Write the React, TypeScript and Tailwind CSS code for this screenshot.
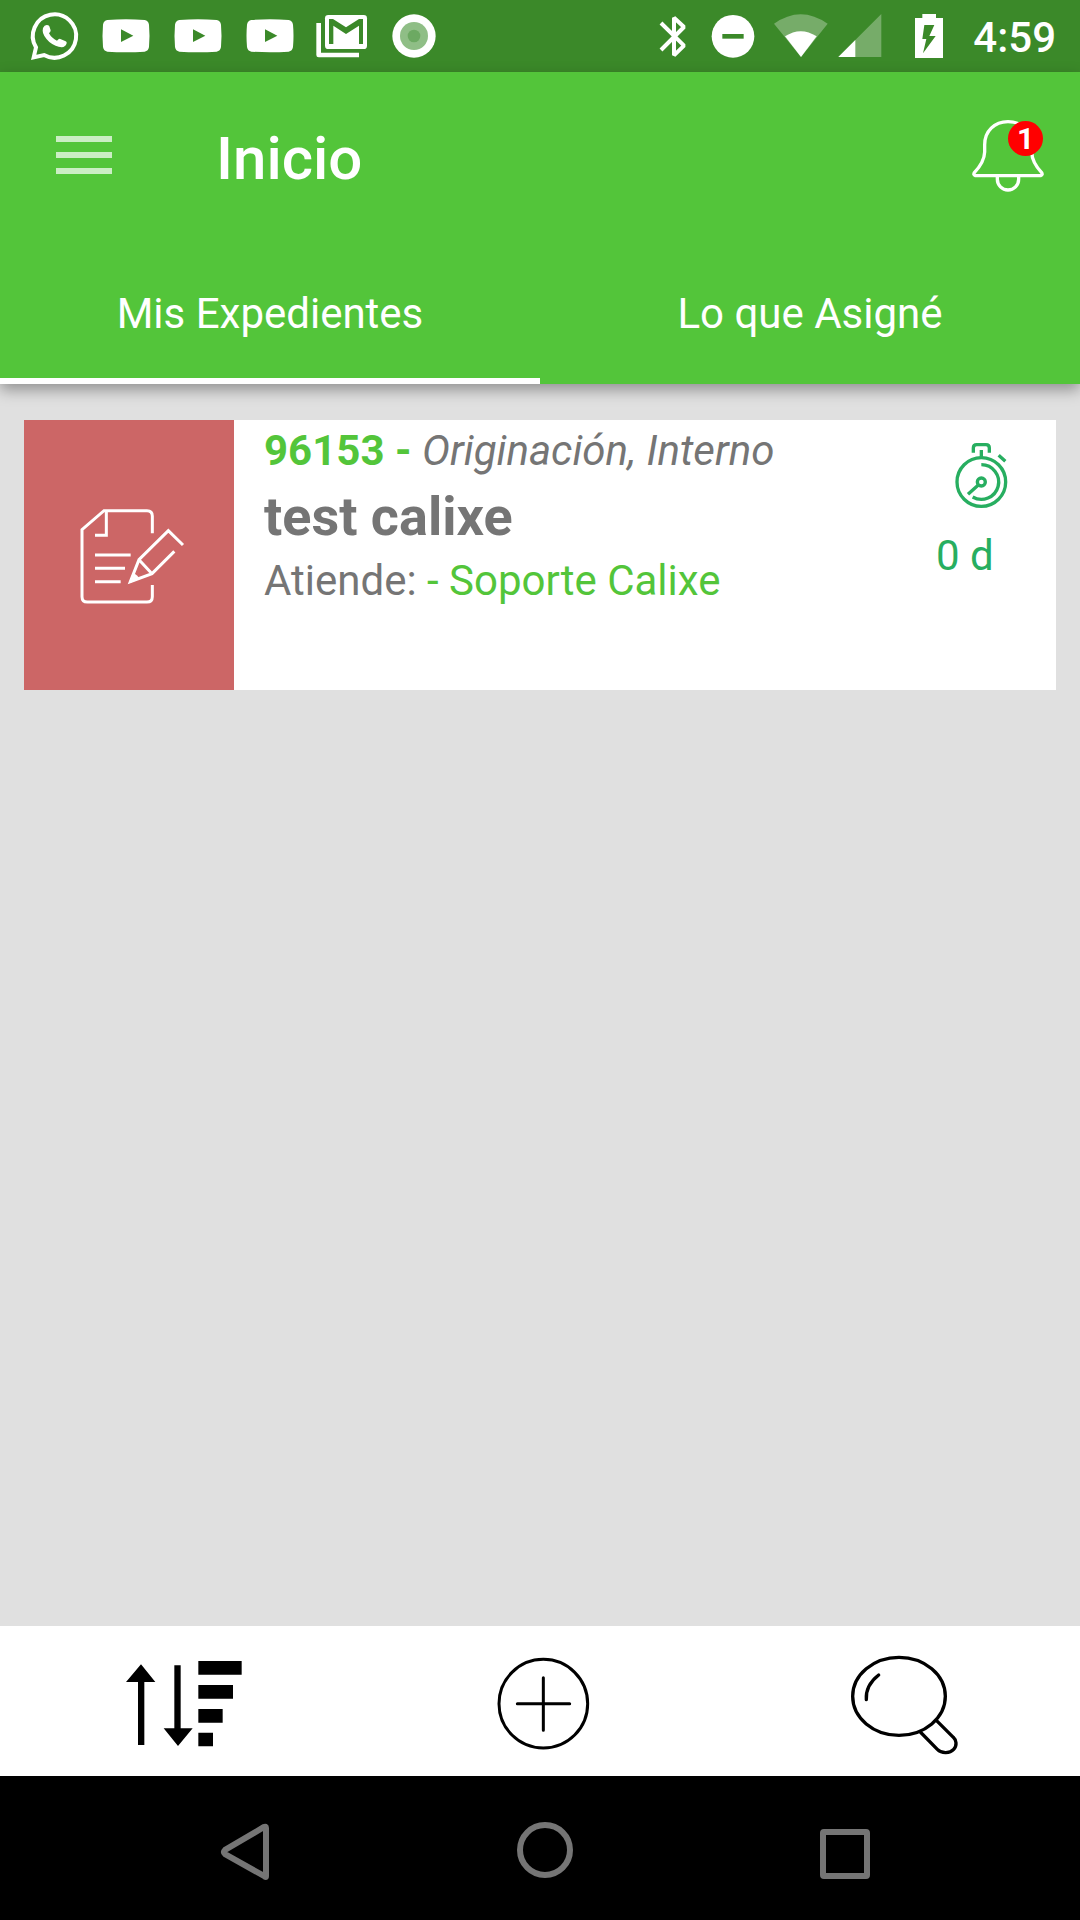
import type { ReactNode } from 'react';

type IconProps = { viewBox: string; className: string; children: ReactNode };

function Icon({ viewBox, className, children }: IconProps) {
  return (
    <svg viewBox={viewBox} className={`shrink-0 overflow-visible ${className}`} fill="none" aria-hidden="true">
      {children}
    </svg>
  );
}

function YoutubeIcon() {
  return (
    <Icon viewBox="306 36 144 144" className="size-12">
      <path
        fill="#fff"
        fillRule="evenodd"
        d="M322 60Q378 55 434 60Q445 62 447 74Q450 107 447 141Q445 153 434 155Q378 158 322 155Q311 153 309 141Q306 107 309 74Q311 62 322 60ZM363 88V126L400 107Z"
      />
    </Icon>
  );
}

function StatusBar() {
  return (
    <div className="flex h-18 items-center bg-[#3b8929] pl-[30px] pr-6 text-white">
      <div className="flex gap-6">
        <Icon viewBox="88 36 144 144" className="size-12">
          <path
            d="M99 172L106 142A65 65 0 1 1 130 165Z"
            stroke="#fff"
            strokeWidth="12"
            strokeLinejoin="miter"
          />
          <path
            fill="#fff"
            d="M127 84Q131 75 138 75Q144 75 146 79L150 91Q151 94 145 100Q153 115 169 122Q175 115 179 117L195 124Q199 126 198 130Q195 141 183 142Q165 141 146 126Q126 106 126 92Z"
          />
        </Icon>
        <YoutubeIcon />
        <YoutubeIcon />
        <YoutubeIcon />
        <Icon viewBox="954 36 144 144" className="size-12">
          <path d="M956 69V165H1077" stroke="#fff" strokeWidth="14" strokeLinejoin="round" />
          <rect x="975" y="45" width="126" height="102" rx="10" fill="#fff" />
          <path
            fill="#3b8929"
            d="M987 132V57H999L1038 82L1077 57H1089V132H1077V77L1038 102L1000 77V132Z"
          />
        </Icon>
        <Icon viewBox="1170 36 144 144" className="size-12">
          <circle cx="1242" cy="108" r="65" fill="#fff" />
          <circle cx="1242" cy="108" r="42" fill="#8fbe86" />
          <circle cx="1242" cy="108" r="19" fill="#6ca962" />
        </Icon>
      </div>
      <div className="ml-auto flex items-center">
        <Icon viewBox="24 36 144 144" className="size-12">
          <path
            d="M60 69L129 137L99 166V53L129 81L60 150"
            stroke="#fff"
            strokeWidth="12"
            strokeLinejoin="bevel"
          />
        </Icon>
        <Icon viewBox="203 36 144 144" className="ml-3 size-12">
          <circle cx="275" cy="109" r="64" fill="#fff" />
          <path d="M243 109H307" stroke="#3b8929" strokeWidth="14" />
        </Icon>
        <Icon viewBox="395 36 168 144" className="ml-4 h-12 w-14">
          <path d="M398 71Q478 14 559 71L479 171Z" fill="#fff" fillOpacity="0.3" />
          <path d="M431 109Q478 78 526 109L479 171Z" fill="#fff" />
        </Icon>
        <Icon viewBox="587 36 144 144" className="ml-2 size-12">
          <path d="M720 42V171H591Z" fill="#fff" fillOpacity="0.3" />
          <path d="M642 120V171H591Z" fill="#fff" />
        </Icon>
        <Icon viewBox="792 36 144 144" className="ml-5 size-12">
          <path
            fill="#fff"
            fillRule="evenodd"
            d="M844 42H885V54H906V174H822V54H844ZM850 75L844 117H856L846 160L884 108H865L880 75Z"
          />
        </Icon>
        <span className="ml-5 pt-1 text-[42px] leading-[48px] font-medium">4:59</span>
      </div>
    </div>
  );
}

function Header() {
  return (
    <header className="relative z-10 bg-[#53c53a] text-white shadow-[0_6px_14px_rgba(0,0,0,0.35)]">
      <div className="flex h-42 items-center pl-14 pr-9">
        <button type="button" aria-label="Menú" className="flex w-14 flex-col gap-2.5 pb-0.5">
          <span className="h-1.5 bg-white/70" />
          <span className="h-1.5 bg-white/70" />
          <span className="h-1.5 bg-white/70" />
        </button>
        <h1 className="ml-26 pt-1.5 text-[60px] leading-[72px] font-medium">Inicio</h1>
        <button type="button" aria-label="Notificaciones" className="relative ml-auto size-18">
          <Icon viewBox="96 60 216 216" className="size-18">
            <path
              d="M106 227H302Q309 225 305 218C289 201 276 183 275 156V134C275 94 246 65 204 65C163 65 134 94 134 134V156C133 183 119 201 103 218Q99 225 106 227ZM172 228V238A32 32 0 0 0 236 238V228"
              stroke="#fff"
              strokeWidth="10"
              strokeLinejoin="round"
            />
          </Icon>
          <span className="absolute top-px right-px flex size-[35px] items-center justify-center rounded-full bg-[#ff0000] text-[30px] leading-9 font-bold">
            1
          </span>
        </button>
      </div>
      <nav className="grid h-36 grid-cols-2 text-[42px] leading-[48px]">
        <button type="button" aria-current="page" className="relative pt-1">
          Mis Expedientes
          <span className="absolute inset-x-0 bottom-0 h-1.5 bg-white" />
        </button>
        <button type="button" className="pt-1">
          Lo que Asigné
        </button>
      </nav>
    </header>
  );
}

function CaseCard() {
  return (
    <article className="flex min-h-[270px] bg-white text-[42px] leading-[60px] text-[#757575]">
      <div className="flex w-[210px] shrink-0 items-center justify-center bg-[#cc6666]">
        <Icon viewBox="42 45 330 300" className="h-[100px] w-[110px]">
          <g stroke="#fff" strokeWidth="9">
            <path d="M277 130V78Q277 62 261 62H132L66 119V320Q66 336 82 336H261Q277 336 277 320V285" />
            <path d="M139 62V136H105M105 195H212M105 235H195M105 275H182" />
            <path d="M369 165L325 122L237 209L211 275L276 251L343 184M237 209L276 251" />
          </g>
          <path d="M218 250L207 280L238 268Q234 254 218 250Z" fill="#fff" />
        </Icon>
      </div>
      <div className="min-w-0 flex-1 pl-[30px]">
        <p className="leading-[62px]">
          <strong className="font-bold text-[#53c53a]">96153 - </strong>
          <em>Originación, Interno</em>
        </p>
        <h2 className="text-[54px] leading-[70px] font-bold">test calixe</h2>
        <p className="leading-[58px]">
          Atiende: <span className="text-[#53c53a]">- Soporte Calixe</span>
        </p>
      </div>
      <div className="w-30 shrink-0 pt-[22px] text-[#27ae60]">
        <Icon viewBox="102 66 162 198" className="ml-[18px] h-[66px] w-[54px]">
          <g stroke="#27ae60" strokeWidth="10">
            <circle cx="184" cy="186" r="73" />
            <circle cx="184" cy="186" r="12" />
            <path d="M184 134A52 52 0 1 1 158 231M175 195L144 223M184 90V114M160 98V84Q160 74 170 74H198Q208 74 208 84V98M236 106L256 124" />
          </g>
        </Icon>
        <p className="mt-[18px]">0 d</p>
      </div>
    </article>
  );
}

function ActionBar() {
  return (
    <div className="grid h-[150px] grid-cols-3 bg-white">
      <button type="button" aria-label="Ordenar" className="flex items-center justify-center">
        <Icon viewBox="54 99 372 288" className="h-24 w-[124px]">
          <path
            fill="#000"
            d="M123 133L166 186H133V375H114V186H78ZM223 136H242V325H278L234 378L191 325H223ZM295 123H425V164H295ZM295 195H399V236H295ZM295 267H368V308H295ZM295 338H339V379H295Z"
          />
        </Icon>
      </button>
      <button type="button" aria-label="Agregar" className="flex items-center justify-center">
        <Icon viewBox="60 93 300 300" className="size-25">
          <g stroke="#000" strokeWidth="9" strokeLinecap="round">
            <circle cx="220" cy="251" r="133" />
            <path d="M220 173V331M142 251H299" />
          </g>
        </Icon>
      </button>
      <button type="button" aria-label="Buscar" className="flex items-center justify-center">
        <Icon viewBox="30 63 360 360" className="size-30">
          <g stroke="#000" strokeWidth="10" strokeLinecap="round">
            <ellipse cx="207" cy="229" rx="139" ry="117" />
            <path d="M109 239Q106 196 146 165M271 336L322 388C336 402 360 400 371 388C382 376 379 360 370 352L319 301" />
          </g>
        </Icon>
      </button>
    </div>
  );
}

function SystemNav() {
  return (
    <div className="grid h-36 grid-cols-3 bg-black px-[90px]">
      <button type="button" aria-label="Atrás" className="flex items-center justify-center">
        <Icon viewBox="200 1808 80 80" className="size-20">
          <path d="M266 1828V1876Q266 1878 264 1876L225 1854Q223 1852 225 1850L264 1827Q266 1826 266 1828Z" stroke="#757575" strokeWidth="6" />
        </Icon>
      </button>
      <button type="button" aria-label="Inicio del sistema" className="flex items-center justify-center">
        <Icon viewBox="500 1808 80 80" className="size-20">
          <circle cx="545" cy="1850" r="25" stroke="#757575" strokeWidth="6" />
        </Icon>
      </button>
      <button type="button" aria-label="Recientes" className="flex items-center justify-center">
        <Icon viewBox="800 1808 80 80" className="size-20">
          <rect x="823" y="1832" width="44" height="44" rx="1" stroke="#757575" strokeWidth="6" />
        </Icon>
      </button>
    </div>
  );
}

export default function App() {
  return (
    <div className="flex min-h-screen flex-col bg-[#e0e0e0] font-[Roboto,sans-serif]">
      <StatusBar />
      <Header />
      <main className="flex-1 px-6 py-9">
        <CaseCard />
      </main>
      <ActionBar />
      <SystemNav />
    </div>
  );
}
